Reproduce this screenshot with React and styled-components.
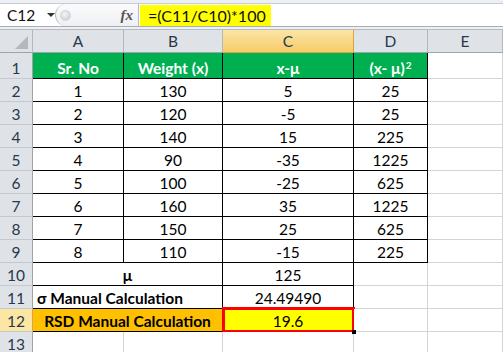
import * as React from "react";
import styled, { createGlobalStyle } from "styled-components";

const GlobalStyle = createGlobalStyle`
  html, body {
    margin: 0;
    padding: 0;
    background: #fff;
  }
  body {
    font-family: Lato, "Liberation Sans", Arial, sans-serif;
  }
`;

const Window = styled.div`
  width: 503px;
  height: 352px;
  overflow: hidden;
  background: #fff;
`;

const TopStrip = styled.div`
  height: 3px;
  background: #eceff3;
`;

const FormulaBar = styled.div`
  display: flex;
  align-items: stretch;
  height: 22px;
  background: #fff;
  border-top: 1px solid #c9cdd3;
  border-bottom: 1px solid #a9aeb5;
`;

const NameBox = styled.div`
  display: flex;
  align-items: center;
  width: 55px;
  padding-left: 7px;
  box-sizing: border-box;
  font-size: 15.5px;
  color: #111;
`;

const DropArrow = styled.span`
  margin-left: 12px;
  width: 0;
  height: 0;
  border-left: 4px solid transparent;
  border-right: 4px solid transparent;
  border-top: 4px solid #333;
`;

const FxGroup = styled.div`
  display: flex;
  align-items: center;
  justify-content: space-between;
  width: 84px;
  box-sizing: border-box;
  padding: 0 5px 0 4px;
  border-left: 1px solid #b8bdc4;
  border-right: 1px solid #b8bdc4;
  border-radius: 12px 0 0 12px;
  background: linear-gradient(#fbfbfc, #eef0f3);
`;

const Grip = styled.span`
  width: 9px;
  height: 9px;
  border-radius: 50%;
  background: radial-gradient(circle at 40% 35%, #f4f5f7, #c3c7cd);
  border: 1px solid #d2d5da;
`;

const FxLabel = styled.span`
  font-family: "Liberation Serif", "Times New Roman", serif;
  font-style: italic;
  font-weight: 700;
  font-size: 15px;
  color: #555;
`;

const FormulaInput = styled.div`
  flex: 1;
  display: flex;
  align-items: center;
  padding-left: 1px;
`;

const Highlight = styled.span`
  display: inline-flex;
  align-items: center;
  height: 21px;
  padding: 0 5px 0 8px;
  background: #ffff00;
  font-size: 16px;
  color: #111;
`;

const BarGap = styled.div`
  height: 2px;
  background: #eef0f3;
  border-bottom: 1px solid #b6bbc2;
`;

const Sheet = styled.div`
  display: grid;
  grid-template-columns: 33px 91px 99px 131px 74px 1fr;
  grid-template-rows: 23px 26px repeat(12, 23px);
  font-size: 15.5px;
  line-height: 18px;
`;

const Corner = styled.div`
  position: relative;
  background: #dfe3e8;
  border-right: 1px solid #b4b9c0;
  border-bottom: 1px solid #9da3ab;
  box-sizing: border-box;

  &::after {
    content: "";
    position: absolute;
    right: 4px;
    bottom: 3px;
    width: 0;
    height: 0;
    border-left: 13px solid transparent;
    border-bottom: 13px solid #b3b8bf;
  }
`;

const ColHeader = styled.div`
  display: flex;
  align-items: center;
  justify-content: center;
  box-sizing: border-box;
  color: #27384d;
  background: ${({ $active }) =>
    $active ? "linear-gradient(#fbe5a6, #f6cc6a)" : "#dfe3e8"};
  border-right: 1px solid ${({ $active }) => ($active ? "#e1a43d" : "#b4b9c0")};
  border-bottom: 1px solid ${({ $active }) => ($active ? "#e1a43d" : "#9da3ab")};
`;

const RowHeader = styled.div`
  display: flex;
  align-items: flex-end;
  justify-content: center;
  padding-bottom: 1px;
  box-sizing: border-box;
  color: #27384d;
  background: ${({ $active }) => ($active ? "#fce6a4" : "#dfe3e8")};
  border-right: 1px solid ${({ $active }) => ($active ? "#e1a43d" : "#9da3ab")};
  border-bottom: 1px solid #c3c8ce;
`;

const Cell = styled.div`
  position: relative;
  grid-column: span ${({ $span }) => $span || 1};
  display: flex;
  align-items: flex-end;
  justify-content: ${({ $left }) => ($left ? "flex-start" : "center")};
  padding: 0 4px 1px;
  box-sizing: border-box;
  white-space: nowrap;
  background: ${({ $fill }) => $fill || "#fff"};
  color: ${({ $ink }) => $ink || "#000"};
  font-weight: ${({ $bold }) => ($bold ? 700 : 400)};
  border-right: 1px solid ${({ $ruled }) => ($ruled ? "#000" : "#d4d4d4")};
  border-bottom: 1px solid ${({ $ruled }) => ($ruled ? "#000" : "#d4d4d4")};

  sup {
    font-size: 10px;
    vertical-align: top;
    line-height: 12px;
    margin-left: 1px;
  }
`;

const SelectedCell = styled(Cell)`
  &::after {
    content: "";
    position: absolute;
    top: -2px;
    left: -1px;
    right: -2px;
    bottom: -2px;
    border: 3px solid #ff0000;
  }

  &::before {
    content: "";
    position: absolute;
    right: -3px;
    bottom: -3px;
    width: 4px;
    height: 4px;
    background: #000;
    z-index: 1;
  }
`;

const GREEN = "#00b050";

const data = [
  [1, 130, 5, 25],
  [2, 120, -5, 25],
  [3, 140, 15, 225],
  [4, 90, -35, 1225],
  [5, 100, -25, 625],
  [6, 160, 35, 1225],
  [7, 150, 25, 625],
  [8, 110, -15, 225],
];

const columns = ["A", "B", "C", "D", "E"];

const App = () => {
  return (
    <Window>
      <GlobalStyle />
      <TopStrip />
      <FormulaBar>
        <NameBox>
          C12
          <DropArrow />
        </NameBox>
        <FxGroup>
          <Grip />
          <FxLabel>fx</FxLabel>
        </FxGroup>
        <FormulaInput>
          <Highlight>=(C11/C10)*100</Highlight>
        </FormulaInput>
      </FormulaBar>
      <BarGap />
      <Sheet>
        <Corner />
        {columns.map((c) => (
          <ColHeader key={c} $active={c === "C"}>
            {c}
          </ColHeader>
        ))}

        <RowHeader>1</RowHeader>
        <Cell $ruled $bold $fill={GREEN} $ink="#fff">Sr. No</Cell>
        <Cell $ruled $bold $fill={GREEN} $ink="#fff">Weight (x)</Cell>
        <Cell $ruled $bold $fill={GREEN} $ink="#fff">x-μ</Cell>
        <Cell $ruled $bold $fill={GREEN} $ink="#fff">
          <span>
            (x- μ)<sup>2</sup>
          </span>
        </Cell>
        <Cell />

        {data.map((row, i) => (
          <React.Fragment key={i}>
            <RowHeader>{i + 2}</RowHeader>
            {row.map((v, j) => (
              <Cell key={j} $ruled>
                {v}
              </Cell>
            ))}
            <Cell />
          </React.Fragment>
        ))}

        <RowHeader>10</RowHeader>
        <Cell $ruled $bold $span={2}>μ</Cell>
        <Cell $ruled>125</Cell>
        <Cell />
        <Cell />

        <RowHeader>11</RowHeader>
        <Cell $ruled $bold $left $span={2}>σ Manual Calculation</Cell>
        <Cell $ruled>24.49490</Cell>
        <Cell />
        <Cell />

        <RowHeader $active>12</RowHeader>
        <Cell $ruled $bold $span={2} $fill="#ffc000">
          RSD Manual Calculation
        </Cell>
        <SelectedCell $ruled $fill="#ffff00">19.6</SelectedCell>
        <Cell />
        <Cell />

        <RowHeader>13</RowHeader>
        <Cell />
        <Cell />
        <Cell />
        <Cell />
        <Cell />
      </Sheet>
    </Window>
  );
};

export default App;
